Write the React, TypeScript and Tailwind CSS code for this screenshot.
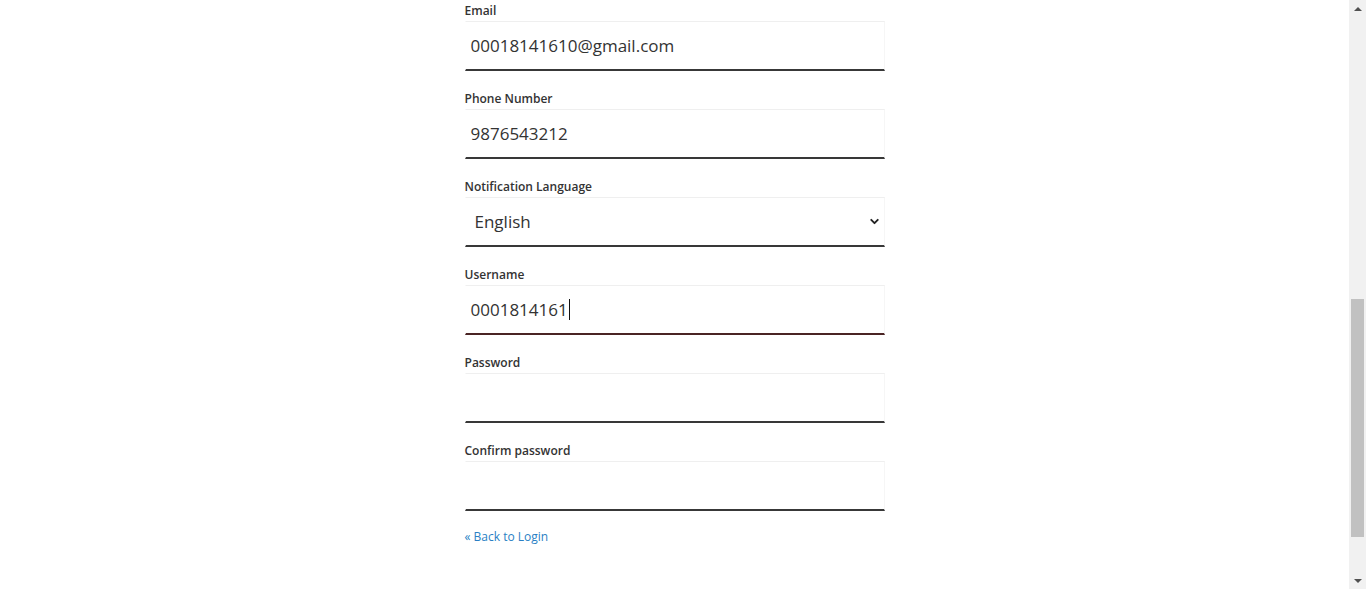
import { ChevronDown } from 'lucide-react';

interface Field {
  label: string;
  value: string;
  type: 'text' | 'password' | 'select';
  focused?: boolean;
}

const fields: Field[] = [
  { label: 'Email', value: '00018141610@gmail.com', type: 'text' },
  { label: 'Phone Number', value: '9876543212', type: 'text' },
  { label: 'Notification Language', value: 'English', type: 'select' },
  { label: 'Username', value: '0001814161', type: 'text', focused: true },
  { label: 'Password', value: '', type: 'password' },
  { label: 'Confirm password', value: '', type: 'password' },
];

function FormField({ field }: { field: Field }) {
  const bottom = field.focused ? 'border-b-[#4a2424]' : 'border-b-[#383838]';
  return (
    <div className="mb-[17px]">
      <div className="h-[21px] text-[12px] leading-[21px] font-semibold text-[#333333]">
        {field.label}
      </div>
      <div
        className={`h-[50px] flex items-center border-t border-l border-r border-b-2 border-l-transparent border-r-[#f6f6f6] border-t-[#efefef] ${bottom} bg-white`}
      >
        {field.type === 'select' ? (
          <div className="flex-1 flex items-center justify-between pl-[9px] pr-[3px]">
            <span className="text-[17px] text-[#333333]">{field.value}</span>
            <ChevronDown size={13} strokeWidth={3.5} className="text-[#222222]" />
          </div>
        ) : (
          <div className="flex-1 flex items-center pl-[5px]">
            <span className="text-[17px] text-[#333333]">{field.value}</span>
            {field.focused && <span className="ml-[1px] w-px h-[21px] bg-[#111111]" />}
          </div>
        )}
      </div>
    </div>
  );
}

export default function App() {
  return (
    <div
      className="flex h-[589px] overflow-hidden bg-white"
      style={{ fontFamily: '"Open Sans", "Noto Sans", sans-serif' }}
    >
      <div className="flex-1 flex justify-center">
        <div className="w-[420px]">
          {fields.map((f) => (
            <FormField key={f.label} field={f} />
          ))}
          <a href="#" className="block mt-[4px] text-[12px] text-[#2a7fc4]">
            « Back to Login
          </a>
        </div>
      </div>
      <div className="w-[17px] bg-[#f1f1f1] flex flex-col items-center">
        <div className="h-[17px] flex items-center justify-center">
          <div className="w-0 h-0 border-l-[4px] border-r-[4px] border-b-[4px] border-l-transparent border-r-transparent border-b-[#505050]" />
        </div>
        <div className="h-[282px]" />
        <div className="w-[13px] h-[238px] bg-[#c1c1c1]" />
        <div className="flex-1" />
        <div className="h-[17px] flex items-center justify-center">
          <div className="w-0 h-0 border-l-[4px] border-r-[4px] border-t-[4px] border-l-transparent border-r-transparent border-t-[#505050]" />
        </div>
      </div>
    </div>
  );
}
